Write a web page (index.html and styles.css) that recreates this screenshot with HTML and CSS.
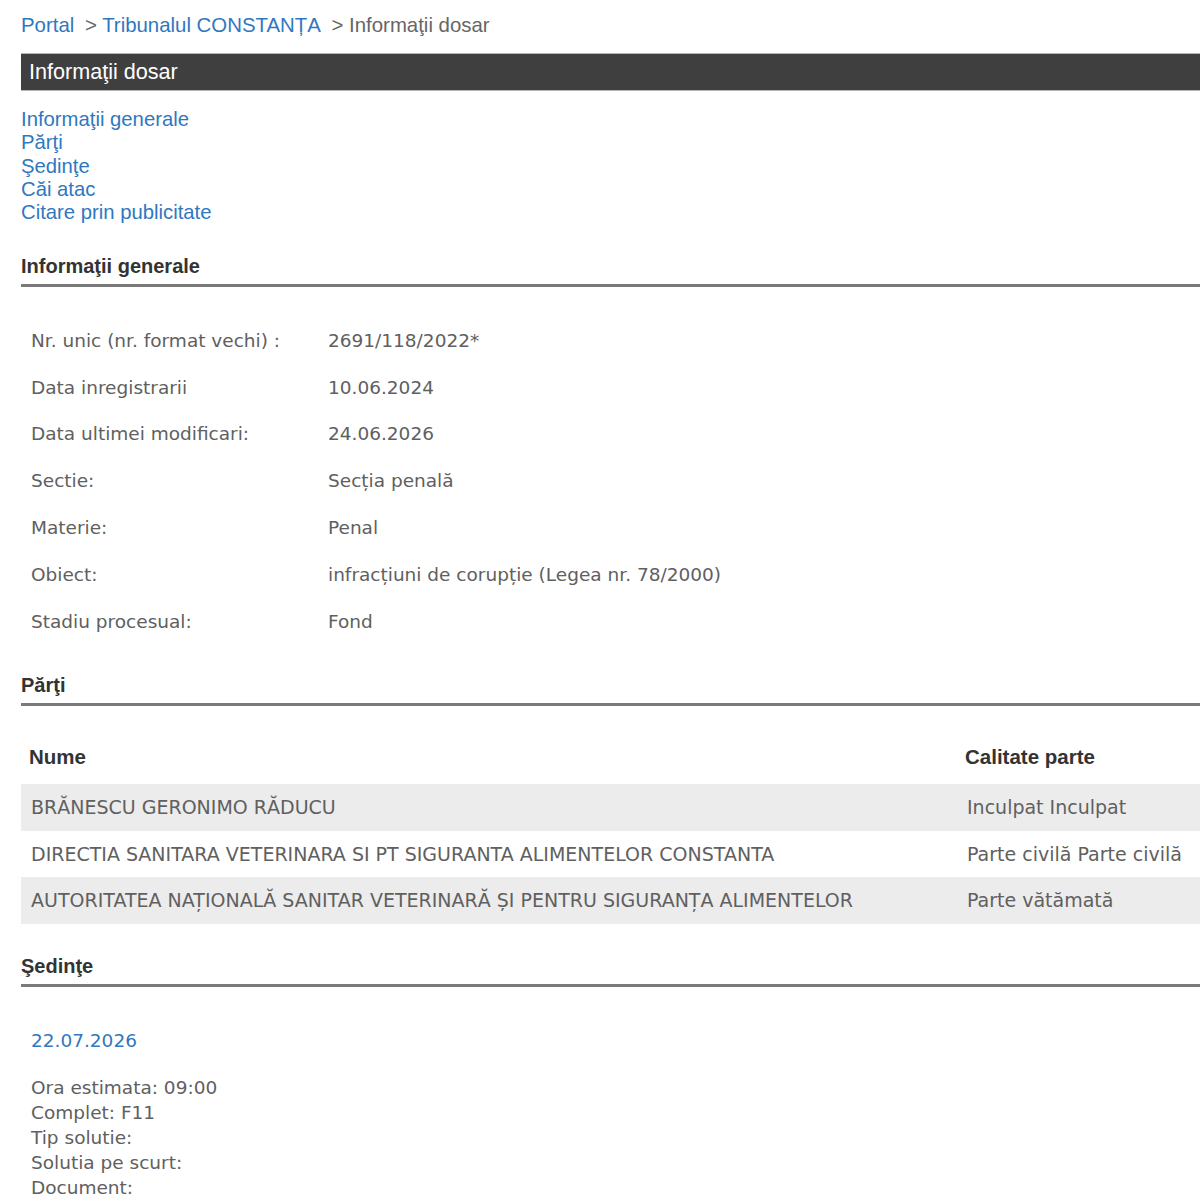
FILE: index.html
```html
<!DOCTYPE html>
<html lang="ro">
<head>
  <meta charset="UTF-8" />
  <meta name="viewport" content="width=device-width, initial-scale=1.0" />
  <title>Informații dosar</title>
  <link rel="stylesheet" href="styles.css">
</head>
<body>
  <div class="page">
    <div class="crumbs">
      <a href="#">Portal</a> &gt; <a href="#">Tribunalul CONSTANȚA</a> &gt; Informaţii dosar
    </div>

    <div class="title-bar">Informaţii dosar</div>

    <ul class="toc">
      <li><a href="#generale">Informaţii generale</a></li>
      <li><a href="#parti">Părţi</a></li>
      <li><a href="#sedinte">Şedinţe</a></li>
      <li><a href="#cai">Căi atac</a></li>
      <li><a href="#citare">Citare prin publicitate</a></li>
    </ul>

    <h3 class="section-title" id="generale">Informaţii generale</h3>
    <table class="info">
      <tr><td class="lbl">Nr. unic (nr. format vechi) :</td><td>2691/118/2022*</td></tr>
      <tr><td class="lbl">Data inregistrarii</td><td>10.06.2024</td></tr>
      <tr><td class="lbl">Data ultimei modificari:</td><td>24.06.2026</td></tr>
      <tr><td class="lbl">Sectie:</td><td>Secția penală</td></tr>
      <tr><td class="lbl">Materie:</td><td>Penal</td></tr>
      <tr><td class="lbl">Obiect:</td><td>infracțiuni de corupție (Legea nr. 78/2000)</td></tr>
      <tr><td class="lbl">Stadiu procesual:</td><td>Fond</td></tr>
    </table>

    <h3 class="section-title" id="parti">Părţi</h3>
    <table class="parti">
      <colgroup><col class="col-name"><col></colgroup>
      <tr><th>Nume</th><th>Calitate parte</th></tr>
      <tr><td>BRĂNESCU GERONIMO RĂDUCU</td><td>Inculpat Inculpat</td></tr>
      <tr><td>DIRECTIA SANITARA VETERINARA SI PT SIGURANTA ALIMENTELOR CONSTANTA</td><td>Parte civilă Parte civilă</td></tr>
      <tr><td>AUTORITATEA NAȚIONALĂ SANITAR VETERINARĂ ȘI PENTRU SIGURANȚA ALIMENTELOR</td><td>Parte vătămată</td></tr>
    </table>

    <h3 class="section-title after-table" id="sedinte">Şedinţe</h3>
    <div class="sedinta">
      <div class="sedinta-data">22.07.2026</div>
      <div class="sedinta-info">
        Ora estimata: 09:00<br>
        Complet: F11<br>
        Tip solutie:<br>
        Solutia pe scurt:<br>
        Document:
      </div>
    </div>
  </div>
</body>
</html>
```

FILE: styles.css
```css
body {
  margin: 0;
  overflow: hidden;
  background: #fff;
  font-family: "Liberation Sans", Arial, sans-serif;
  color: #606060;
}
a {
  color: #2f78c0;
  text-decoration: none;
}
.page {
  width: 1240px;
  padding-left: 21px;
}
.crumbs {
  margin-top: 13px;
  font-size: 20.4px;
  line-height: 24px;
  color: #666;
}
.crumbs a {
  margin-right: 5px;
}
.title-bar {
  margin-top: 16px;
  background: #403f3f;
  border-top: 1px solid #b5b5b5;
  border-bottom: 1px solid #b5b5b5;
  color: #fff;
  font-size: 21.6px;
  line-height: 36px;
  padding-left: 8px;
}
.toc {
  list-style: none;
  margin: 17px 0 0;
  padding: 0 0 1px;
  font-size: 20.3px;
  line-height: 23.3px;
}
.section-title {
  margin: 28.5px 0 0;
  padding-bottom: 6px;
  border-bottom: 3px solid #7a7a7a;
  font-size: 20px;
  line-height: 24px;
  font-weight: bold;
  color: #333;
}
.section-title.after-table {
  margin-top: 30.5px;
}
.info {
  margin-top: 30px;
  border-collapse: collapse;
  font-family: "DejaVu Sans", Verdana, sans-serif;
  font-size: 18.5px;
}
.info td {
  height: 46.8px;
  padding: 0;
  vertical-align: middle;
}
.info .lbl {
  width: 297px;
  padding-left: 10px;
}
.parti {
  margin-top: 28px;
  width: 100%;
  table-layout: fixed;
  border-collapse: collapse;
  font-family: "DejaVu Sans", Verdana, sans-serif;
  font-size: 19px;
}
.parti .col-name {
  width: 936px;
}
.parti th {
  height: 46px;
  padding: 0 8px 4px;
  text-align: left;
  font-family: "Liberation Sans", Arial, sans-serif;
  font-size: 20.5px;
  font-weight: bold;
  color: #333;
  vertical-align: middle;
}
.parti td {
  height: 46.5px;
  padding: 0 10px;
  white-space: nowrap;
  vertical-align: middle;
}
.parti tr:nth-child(even) td {
  background: #ececec;
}
.sedinta {
  padding-left: 10px;
  font-family: "DejaVu Sans", Verdana, sans-serif;
  font-size: 18.5px;
}
.sedinta-data {
  margin-top: 42px;
  line-height: 24px;
  color: #2f78c0;
}
.sedinta-info {
  margin-top: 22px;
  line-height: 25px;
}
```
